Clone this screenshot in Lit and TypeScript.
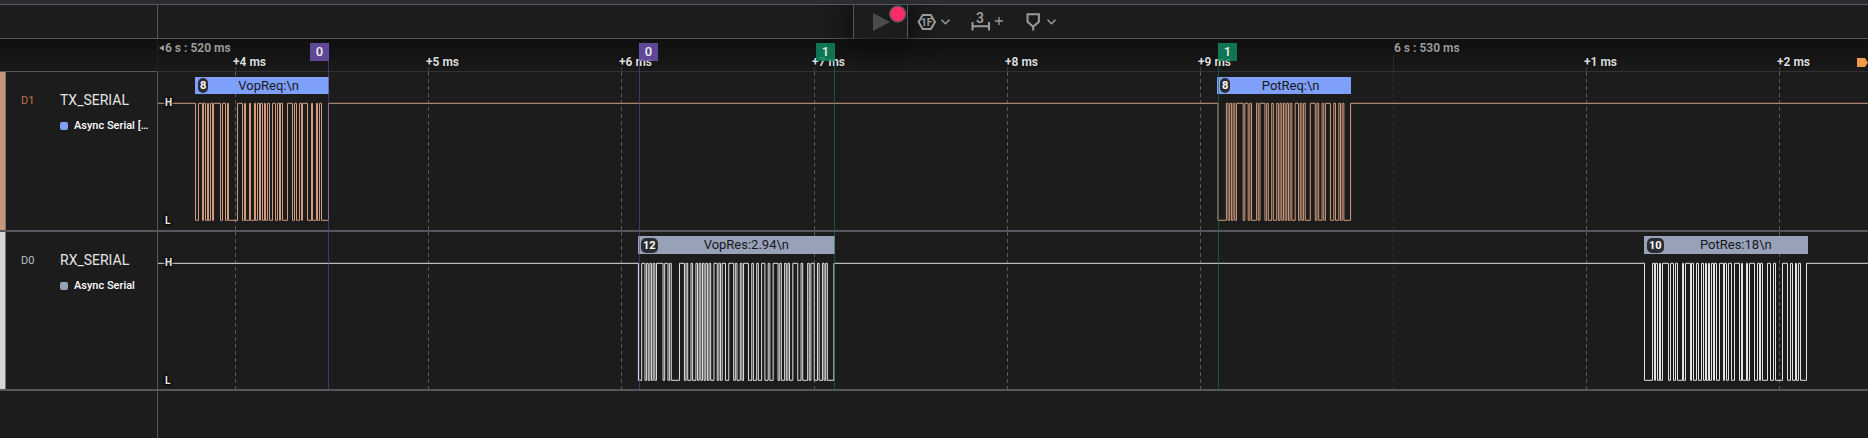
import { LitElement, html, css, svg } from "lit";
import { customElement } from "lit/decorators.js";

interface Burst { start: number; end: number; text: string; crisp: boolean; }
interface Channel { id: string; name: string; analyzer: string; tone: string; bursts: Burst[]; }

const PX_PER_MS = 193;
const ORIGIN = 78 - 4 * PX_PER_MS;
const at = (ms: number) => ORIGIN + ms * PX_PER_MS;

const HIGH = 31;
const LOW = 148;

const channels: Channel[] = [
  {
    id: "D1", name: "TX_SERIAL", analyzer: "Async Serial […", tone: "tx",
    bursts: [
      { start: 3.789, end: 4.477, text: "VopReq:\n", crisp: true },
      { start: 9.088, end: 9.775, text: "PotReq:\n", crisp: false },
    ],
  },
  {
    id: "D0", name: "RX_SERIAL", analyzer: "Async Serial", tone: "rx",
    bursts: [
      { start: 6.085, end: 7.098, text: "VopRes:2.94\n", crisp: false },
      { start: 11.297, end: 12.139, text: "PotRes:18\n", crisp: true },
    ],
  },
];

const ticks = [
  { ms: 4, label: "+4 ms" }, { ms: 5, label: "+5 ms" }, { ms: 6, label: "+6 ms" },
  { ms: 7, label: "+7 ms" }, { ms: 8, label: "+8 ms" }, { ms: 9, label: "+9 ms" },
  { ms: 10, label: "6 s : 530 ms", major: true },
  { ms: 11, label: "+1 ms" }, { ms: 12, label: "+2 ms" },
];

const markers = [
  { ms: 4.477, label: "0", tone: "violet", side: "before" },
  { ms: 6.088, label: "0", tone: "violet", side: "after" },
  { ms: 7.098, label: "1", tone: "green", side: "before" },
  { ms: 9.088, label: "1", tone: "green", side: "after" },
];

/** 8N1 framing: start bit, eight data bits from the lowest up, stop bit. */
function bitsOf(text: string): number[] {
  return [...text].flatMap((ch) => {
    const code = ch.charCodeAt(0);
    return [0, ...Array.from({ length: 8 }, (_, i) => (code >> i) & 1), 1];
  });
}

function tracePath(bursts: Burst[]): string {
  let d = `M0 ${HIGH}`;
  for (const b of bursts) {
    const bits = bitsOf(b.text).slice(0, -1);
    const step = (at(b.end) - at(b.start)) / bits.length;
    let level = 1;
    [...bits, 1].forEach((bit, i) => {
      if (bit === level) return;
      const exact = at(b.start) + i * step;
      const x = b.crisp ? Math.floor(exact) + 0.5 : exact.toFixed(2);
      d += `H${x}V${bit ? HIGH : LOW}`;
      level = bit;
    });
  }
  return d + "H8000";
}

@customElement("app-root")
export class AppRoot extends LitElement {
  static styles = css`
    * { box-sizing: border-box; }
    :host {
      display: flex; flex-direction: column; min-height: 100vh; overflow: hidden;
      background: #1c1c1c; color: #e6e6e6;
      font: 12px/16px Roboto, "Liberation Sans", sans-serif;
    }
    .strip { height: 4px; background: #2b2c32; }
    .toolbar {
      display: grid; grid-template-columns: 158px 1fr; height: 35px;
      border-top: 1px solid #56565c; border-bottom: 1px solid #56565c;
    }
    .corner { border-right: 1px solid #56565c; }
    .tools { display: flex; position: relative; z-index: 2; padding-left: 695px; clip-path: inset(0 -10px -60px 0); }
    .capture {
      position: relative; width: 55px; padding: 0; background: #1c1c1c;
      border: 0 solid #56565c; border-width: 0 1px; box-shadow: 0 0 24px 4px #0c0c0c;
    }
    .capture svg { display: block; }
    .tool { position: relative; border: 0; padding: 0; background: none; display: block; }
    .tool svg { display: block; }
    .glyph { font: 700 10px Roboto, sans-serif; fill: #9b9b9b; }
    .digit { font: 500 14px Roboto, sans-serif; fill: #a2a2a2; }

    .main { flex: 1; display: grid; grid-template-columns: 158px 1fr; grid-template-rows: 33px 160px 159px 1fr; position: relative; }
    .side { border-right: 1px solid #56565c; }
    .ruler-side { border-right: 1px solid #202022; border-bottom: 1px solid #56565c; background: linear-gradient(#0f0f0f, #1a1a1a); }
    .ruler { position: relative; border-bottom: 1px solid #303035; background: linear-gradient(#0f0f0f, #1a1a1a); }
    .channel { display: flex; border-bottom: 2px solid #56565c; }
    .swatch { width: 6px; border-right: 1px solid #77777a; }
    .swatch.tx { background: #c8967a; }
    .swatch.rx { background: #d6d6d6; }
    .id { width: 39px; padding: 21px 0 0 15px; font-size: 11px; }
    .id.tx { color: #c0714f; }
    .id.rx { color: #b9bccb; }
    .names { flex: 1; min-width: 0; padding: 20px 4px 0 15px; }
    .name { font-size: 14px; }
    .analyzer { display: flex; align-items: center; gap: 6px; margin-top: 10px; font-size: 11px; font-weight: 500; color: #fff; }
    .analyzer i { flex: none; width: 8px; height: 8px; border-radius: 2px; }
    .analyzer .tx, .note.tx { background: #7e9ffa; }
    .analyzer .rx, .note.rx { background: #97a2b8; }
    .analyzer span { overflow: hidden; text-overflow: ellipsis; white-space: nowrap; }

    .lane { position: relative; overflow: hidden; border-bottom: 2px solid #56565c; }
    .blank { min-height: 20px; }
    .trace { position: absolute; inset: 0; width: 100%; height: 100%; }
    .wave { fill: none; stroke-width: 1; }
    .wave.tx { stroke: #d09c7f; }
    .wave.rx { stroke: #e2e2e2; }
    .tick { stroke: #58585a; stroke-width: 1; stroke-dasharray: 4 3; }
    .tick.major { stroke: #303032; }
    .level {
      position: absolute; left: 7px; font-size: 10px; line-height: 12px; font-weight: 700; color: #eee;
      text-shadow: 0 0 2px #000, 0 0 3px #000, 0 0 3px #000;
    }
    .level.high { top: 25px; }
    .level.low { top: 143px; }
    .note {
      position: absolute; top: 5px; height: 17px; display: flex; align-items: center; padding-left: 3px;
      color: #16181d; font-size: 13px;
    }
    .note.rx { top: 4px; height: 18px; }
    .note span { flex: 1; text-align: center; white-space: pre; }
    .note b { background: #2b2c32; color: #fff; border-radius: 5px; padding: 0 2px; font-size: 11px; line-height: 15px; }

    .stamp { position: absolute; white-space: nowrap; font-weight: 700; text-shadow: 0 0 2px #000; top: 15px; margin-left: -3px; color: #dcdcdc; }
    .stamp.major { top: 1px; margin-left: 0; color: #999; }
    .back { position: absolute; top: 1px; left: 1px; display: flex; align-items: center; gap: 1px; font-weight: 700; color: #999; }
    .stem { position: absolute; top: 28px; bottom: -1px; width: 1px; background: #3c3c40; }
    .stem.major { top: 16px; background: #2c2c2e; }
    .flag { position: absolute; right: 0; top: 19px; display: block; }

    .overlay { position: absolute; left: 158px; right: 0; top: 4px; height: 346px; overflow: hidden; pointer-events: none; }
    .cursor { position: absolute; top: 0; bottom: 0; width: 1px; }
    .cursor span { position: absolute; top: 0; width: 19px; height: 18px; font-size: 13px; font-weight: 500; line-height: 18px; text-align: center; color: #eee; }
    .before span { right: 0; }
    .after span { left: 0; }
    .violet { background: #5d479599; }
    .violet span { background: #6a50abdd; }
    .green { background: #127a5899; }
    .green span { background: #0f8560dd; }
  `;

  private chevron(x: number) {
    return svg`<path d="M${x} 14.800l4 4 4-4" fill="none" stroke="#9b9b9b" stroke-width="1.500"/>`;
  }

  private renderTools() {
    return html`
      <button class="capture" aria-label="Start capture">
        <svg width="53" height="33" viewBox="0 0 53 33">
          <path d="M19 8v18l17-9z" fill="#4b4b4b"/>
          <circle cx="43.700" cy="9" r="8" fill="#fa2d69" stroke="#55555b" stroke-width="1.300"/>
        </svg>
      </button>
      <button class="tool" aria-label="Glitch filter">
        <svg width="50" height="33" viewBox="0 0 50 33">
          <path d="M14.800 10h8l4.200 7-4.200 7h-8l-4.200-7z" fill="none" stroke="#9b9b9b" stroke-width="2"/>
          <text class="glyph" x="13" y="20.500">1F</text>
          ${this.chevron(33.5)}
        </svg>
      </button>
      <button class="tool" aria-label="Add measurement">
        <svg width="54" height="33" viewBox="0 0 54 33">
          <text class="digit" x="18" y="18">3</text>
          <path d="M14.500 17v8.500M31 17v8.500M14 21.300h17" fill="none" stroke="#9b9b9b" stroke-width="2"/>
          <path d="M37 16h8M41 12v8" stroke="#9b9b9b" stroke-width="1.300"/>
        </svg>
      </button>
      <button class="tool" aria-label="Add marker">
        <svg width="50" height="33" viewBox="0 0 50 33">
          <path d="M15.500 9.200h11.400v7.500l-5.700 5-5.700-5zM21.200 21v4.500" fill="none" stroke="#9b9b9b" stroke-width="2"/>
          ${this.chevron(35.5)}
        </svg>
      </button>`;
  }

  private renderChannel(c: Channel) {
    return html`
      <div class="side channel">
        <div class="swatch ${c.tone}"></div>
        <div class="id ${c.tone}">${c.id}</div>
        <div class="names">
          <div class="name">${c.name}</div>
          <div class="analyzer"><i class=${c.tone}></i><span>${c.analyzer}</span></div>
        </div>
      </div>
      <div class="lane">
        <svg class="trace">
          ${ticks.map((t) => svg`<line class="tick ${t.major ? "major" : ""}" x1=${at(t.ms) - 0.5} x2=${at(t.ms) - 0.5} y1="0" y2="158"/>`)}
          <path class="wave ${c.tone}" d=${tracePath(c.bursts)} transform="translate(0 .3)"/>
        </svg>
        ${c.bursts.map((b) => html`
          <div class="note ${c.tone}" style="left:${Math.round(at(b.start) - 0.7)}px;width:${Math.round(at(b.end) - at(b.start)) + 1}px">
            <b>${b.text.length}</b><span>${b.text.replace("\n", "\\n")}</span>
          </div>`)}
        <span class="level high">H</span>
        <span class="level low">L</span>
      </div>`;
  }

  render() {
    return html`
      <div class="strip"></div>
      <div class="toolbar">
        <div class="corner"></div>
        <div class="tools">${this.renderTools()}</div>
      </div>
      <div class="main">
        <div class="ruler-side"></div>
        <div class="ruler">
          <span class="back">
            <svg width="5" height="6" viewBox="0 0 5 6"><path d="M5 0v6L0 3z" fill="#999"/></svg>6 s : 520 ms
          </span>
          ${ticks.map((t) => html`
            <i class="stem ${t.major ? "major" : ""}" style="left:${at(t.ms) - 1}px"></i>
            <span class="stamp ${t.major ? "major" : ""}" style="left:${at(t.ms)}px">${t.label}</span>`)}
          <svg class="flag" width="11" height="9" viewBox="0 0 11 9"><path d="M0 0h8l3 4.500L8 9H0z" fill="#f0994a"/></svg>
        </div>
        ${channels.map((c) => this.renderChannel(c))}
        <div class="side"></div>
        <div class="blank"></div>
        <div class="overlay">
          ${markers.map((m) => html`
            <div class="cursor ${m.tone} ${m.side}" style="left:${Math.round(at(m.ms))}px"><span>${m.label}</span></div>`)}
        </div>
      </div>`;
  }
}
